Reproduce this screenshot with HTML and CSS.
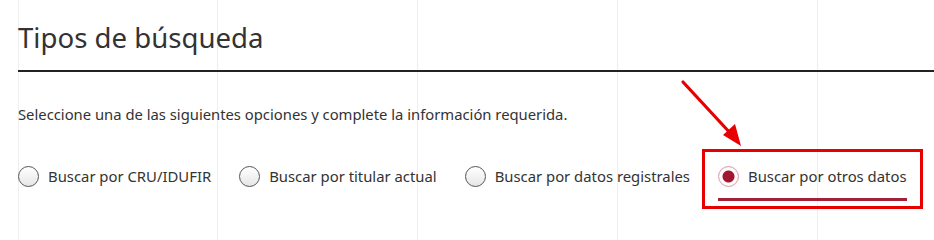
FILE: index.html
```html
<!DOCTYPE html>
<html lang="es">
<head>
<meta charset="utf-8">
<title>Tipos de búsqueda</title>
<link rel="stylesheet" href="styles.css">
</head>
<body>
<div class="page">
  <h1 class="title">Tipos de búsqueda</h1>
  <p class="intro">Seleccione una de las siguientes opciones y complete la información requerida.</p>
  <div class="options">
    <label class="option"><span class="radio"></span><span class="label">Buscar por CRU/IDUFIR</span></label>
    <label class="option"><span class="radio"></span><span class="label">Buscar por titular actual</span></label>
    <label class="option"><span class="radio"></span><span class="label">Buscar por datos registrales</span></label>
    <label class="option selected"><span class="radio"></span><span class="label">Buscar por otros datos</span></label>
  </div>
</div>
<div class="highlight-box"></div>
<svg class="arrow" width="90" height="90" viewBox="0 0 90 90">
  <line x1="5" y1="5" x2="54" y2="58" stroke="#e60000" stroke-width="3.2" stroke-linecap="round"/>
  <polygon points="63,69 45,58 57,47" fill="#e60000"/>
</svg>
</body>
</html>
```
FILE: styles.css
```css
html, body {
  margin: 0;
  padding: 0;
}
body {
  width: 934px;
  height: 224px;
  overflow: hidden;
  position: relative;
  background-color: #fff;
  background-image: linear-gradient(to right, transparent 18px, #efefef 18px, #efefef 19px, transparent 19px),
    linear-gradient(to right, transparent 217px, #efefef 217px, #efefef 218px, transparent 218px),
    linear-gradient(to right, transparent 417px, #efefef 417px, #efefef 418px, transparent 418px),
    linear-gradient(to right, transparent 617px, #efefef 617px, #efefef 618px, transparent 618px),
    linear-gradient(to right, transparent 817px, #efefef 817px, #efefef 818px, transparent 818px);
  font-family: "Noto Sans", "Open Sans", sans-serif;
  color: #333;
}
.page {
  padding-left: 18px;
}
.title {
  margin: 0;
  padding-top: 17px;
  padding-bottom: 13px;
  font-size: 27.6px;
  line-height: 40px;
  font-weight: 400;
  color: #333;
  border-bottom: 2px solid #222;
}
.intro {
  margin: 32px 0 0;
  font-size: 14.8px;
  line-height: 20px;
  color: #333;
}
.options {
  display: flex;
  gap: 28px;
  margin-top: 41px;
}
.option {
  display: flex;
  align-items: center;
  gap: 9px;
  padding-bottom: 11px;
  border-bottom: 3px solid transparent;
  font-size: 14.85px;
  line-height: 22px;
  color: #333;
}
.radio {
  box-sizing: border-box;
  width: 21px;
  height: 21px;
  border-radius: 50%;
  border: 1px solid #555;
  background: linear-gradient(#fff, #e6e6e6);
  flex: none;
}
.option.selected {
  border-bottom-color: #a52036;
}
.option.selected .radio {
  border: 1px solid #d8a2aa;
  background: radial-gradient(circle, #a3162f 0, #a3162f 5.5px, #fff 6.5px, #fff 8px, #f3e6e8 10px);
}
.highlight-box {
  position: absolute;
  left: 702px;
  top: 149px;
  width: 215px;
  height: 54px;
  border: 3px solid #e60000;
}
.arrow {
  position: absolute;
  left: 678px;
  top: 77px;
}
```
